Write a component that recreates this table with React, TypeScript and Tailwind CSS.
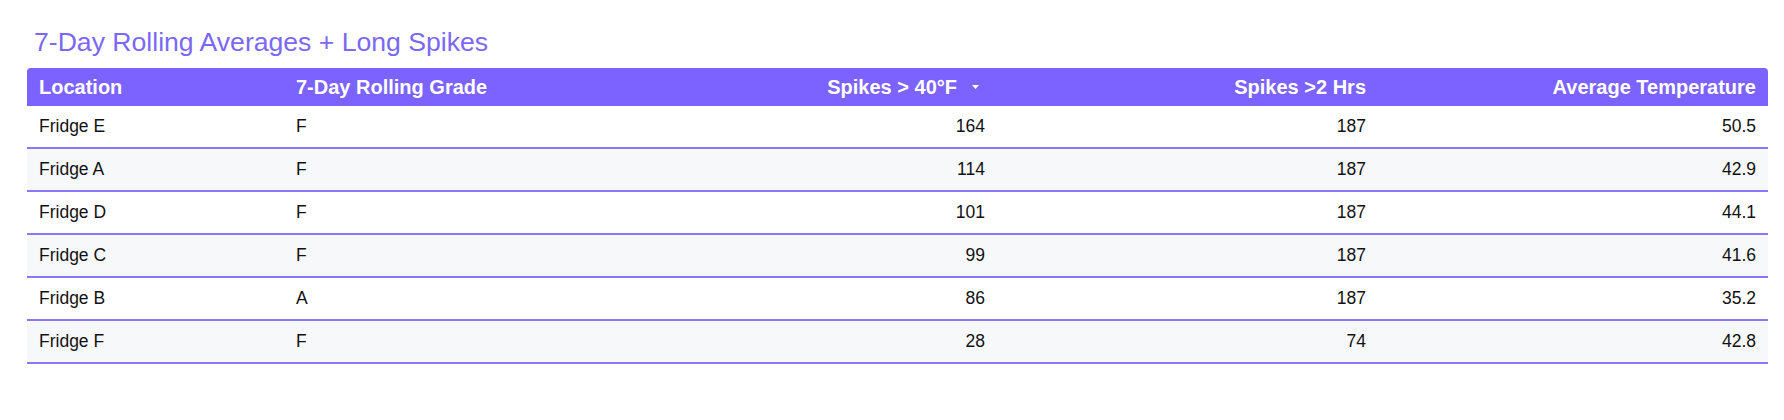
const rows = [
  { location: "Fridge E", grade: "F", spikes40: 164, spikes2h: 187, avgTemp: "50.5" },
  { location: "Fridge A", grade: "F", spikes40: 114, spikes2h: 187, avgTemp: "42.9" },
  { location: "Fridge D", grade: "F", spikes40: 101, spikes2h: 187, avgTemp: "44.1" },
  { location: "Fridge C", grade: "F", spikes40: 99, spikes2h: 187, avgTemp: "41.6" },
  { location: "Fridge B", grade: "A", spikes40: 86, spikes2h: 187, avgTemp: "35.2" },
  { location: "Fridge F", grade: "F", spikes40: 28, spikes2h: 74, avgTemp: "42.8" },
];

const GRID = "grid grid-cols-[257px_356px_357px_381px_1fr] items-center";

export default function App() {
  return (
    <div
      className="min-h-[420px] bg-white pl-[27px] pr-[16px] pt-[27px]"
      style={{ fontFamily: '"Liberation Sans", Arial, sans-serif' }}
    >
      {/* Title */}
      <h2 className="pl-[7px] text-[26.6px] leading-[30px] text-[#7b68f5]">
        7-Day Rolling Averages + Long Spikes
      </h2>

      {/* Table */}
      <div className="mt-[11px]">
        <div className={`${GRID} h-[38px] rounded-t-[4px] bg-[#7c63ff] text-[20px] font-bold text-white`}>
          <div className="px-3">Location</div>
          <div className="px-3">7-Day Rolling Grade</div>
          <div className="flex items-center justify-end pl-3 pr-[18px]">
            <span>Spikes &gt; 40°F</span>
            <svg className="ml-[15px]" width="7" height="4" viewBox="0 0 7 4">
              <path d="M0 0h7L3.5 4z" fill="white" />
            </svg>
          </div>
          <div className="px-3 text-right">Spikes &gt;2 Hrs</div>
          <div className="px-3 text-right">Average Temperature</div>
        </div>

        {rows.map((r, i) => (
          <div
            key={r.location}
            className={`${GRID} h-[43px] border-b-2 border-[#8877fb] text-[17.5px] text-[#111] ${
              i % 2 === 1 ? "bg-[#f7f8fa]" : "bg-white"
            }`}
          >
            <div className="px-3">{r.location}</div>
            <div className="px-3">{r.grade}</div>
            <div className="px-3 text-right">{r.spikes40}</div>
            <div className="px-3 text-right">{r.spikes2h}</div>
            <div className="px-3 text-right">{r.avgTemp}</div>
          </div>
        ))}
      </div>
    </div>
  );
}
